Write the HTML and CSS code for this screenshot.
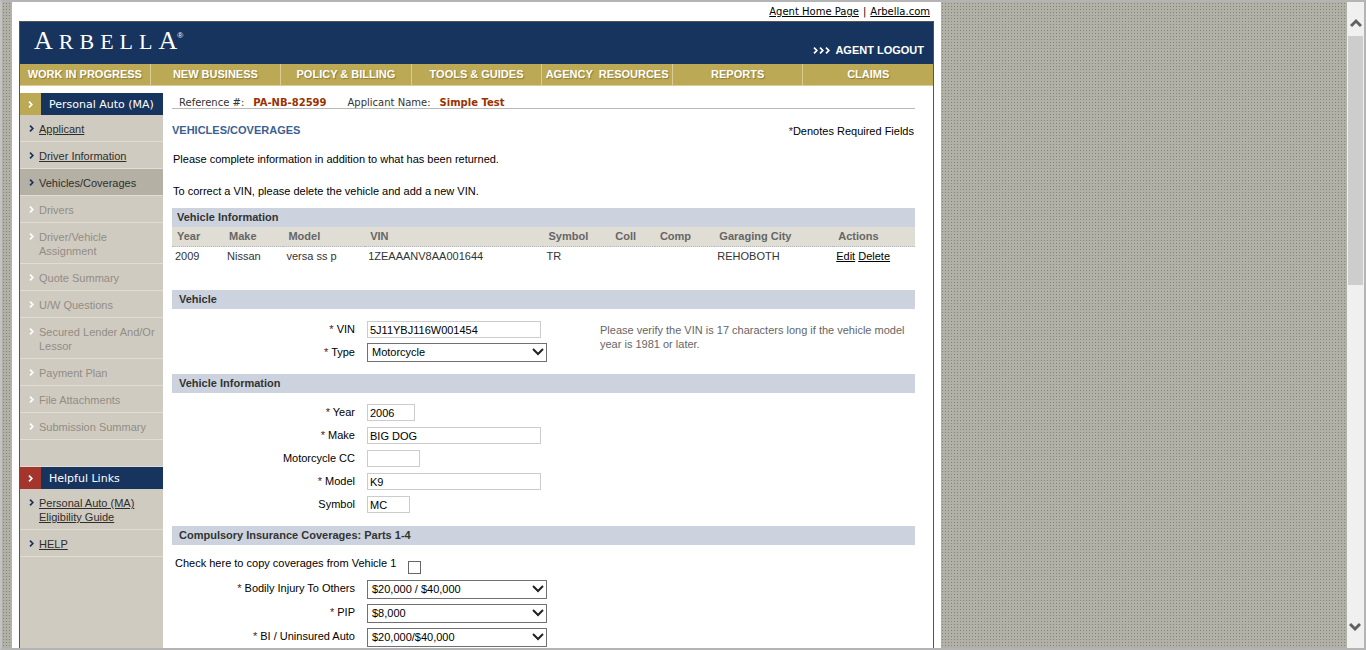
FILE: index.html
```html
<!DOCTYPE html>
<html lang="en">
<head>
<meta charset="utf-8">
<title>Arbella - Vehicles/Coverages</title>
<link rel="stylesheet" href="styles.css">
</head>
<body>
<svg class="sprite" aria-hidden="true">
  <symbol id="arrow" viewBox="0 0 5 7"><path d="M1 .7l2.8 2.8L1 6.3" fill="none" stroke="currentColor" stroke-width="1.7"/></symbol>
  <symbol id="caret" viewBox="0 0 12 8"><path d="M1 1l5 5 5-5" fill="none" stroke="currentColor" stroke-width="2"/></symbol>
  <symbol id="scroll" viewBox="0 0 12 10"><path d="M1 8l5-5 5 5" fill="none" stroke="#606060" stroke-width="3"/></symbol>
</svg>
<div class="window">
  <div class="view">
    <div class="sheet">
      <div class="toplinks"><a href="#">Agent Home Page</a><span>|</span><a href="#">Arbella.com</a></div>
      <div class="frame">
        <header class="banner">
          <div class="logo"><span class="cap">A</span>RBELL<span class="cap last">A</span><span class="reg">®</span></div>
          <a class="logout" href="#"><span class="chevrons"><svg><use href="#arrow"/></svg><svg><use href="#arrow"/></svg><svg><use href="#arrow"/></svg></span>AGENT LOGOUT</a>
        </header>
        <nav class="mainnav">
          <a href="#">WORK IN PROGRESS</a><a href="#">NEW BUSINESS</a><a href="#">POLICY &amp; BILLING</a><a href="#">TOOLS &amp; GUIDES</a><a href="#">AGENCY&nbsp; RESOURCES</a><a href="#">REPORTS</a><a href="#">CLAIMS</a>
        </nav>
        <div class="columns">
          <aside class="side">
            <h2 class="side-title"><span class="tab"><svg><use href="#arrow"/></svg></span><span class="name">Personal Auto (MA)</span></h2>
            <ul>
              <li><svg><use href="#arrow"/></svg><a href="#">Applicant</a></li>
              <li><svg><use href="#arrow"/></svg><a href="#">Driver Information</a></li>
              <li class="current"><svg><use href="#arrow"/></svg><span>Vehicles/Coverages</span></li>
              <li class="off"><svg><use href="#arrow"/></svg><span>Drivers</span></li>
              <li class="off"><svg><use href="#arrow"/></svg><span>Driver/Vehicle<br>Assignment</span></li>
              <li class="off"><svg><use href="#arrow"/></svg><span>Quote Summary</span></li>
              <li class="off"><svg><use href="#arrow"/></svg><span>U/W Questions</span></li>
              <li class="off"><svg><use href="#arrow"/></svg><span>Secured Lender And/Or Lessor</span></li>
              <li class="off"><svg><use href="#arrow"/></svg><span>Payment Plan</span></li>
              <li class="off"><svg><use href="#arrow"/></svg><span>File Attachments</span></li>
              <li class="off"><svg><use href="#arrow"/></svg><span>Submission Summary</span></li>
            </ul>
            <h2 class="side-title help"><span class="tab"><svg><use href="#arrow"/></svg></span><span class="name">Helpful Links</span></h2>
            <ul>
              <li><svg><use href="#arrow"/></svg><a href="#">Personal Auto (MA)<br>Eligibility Guide</a></li>
              <li><svg><use href="#arrow"/></svg><a href="#">HELP</a></li>
            </ul>
          </aside>
          <main class="main">
            <div class="reference"><span>Reference #:</span><b>PA-NB-82599</b><span class="second">Applicant Name:</span><b>Simple Test</b></div>
            <div class="heading"><h1>VEHICLES/COVERAGES</h1><span><i>*</i>Denotes Required Fields</span></div>
            <p>Please complete information in addition to what has been returned.</p>
            <p>To correct a VIN, please delete the vehicle and add a new VIN.</p>
            <table class="vehicles">
              <caption>Vehicle Information</caption>
              <colgroup><col class="w7"><col class="w8"><col class="w11"><col class="w24"><col class="w9"><col class="w6"><col class="w8"><col class="w16"><col class="w11"></colgroup>
              <thead><tr><th>Year</th><th>Make</th><th>Model</th><th>VIN</th><th>Symbol</th><th>Coll</th><th>Comp</th><th>Garaging City</th><th>Actions</th></tr></thead>
              <tbody><tr><td>2009</td><td>Nissan</td><td>versa ss p</td><td>1ZEAAANV8AA001644</td><td>TR</td><td></td><td></td><td>REHOBOTH</td><td><a href="#">Edit</a> <a href="#">Delete</a></td></tr></tbody>
            </table>

            <h3 class="section">Vehicle</h3>
            <div class="vin-block">
              <div class="fields">
                <label for="vin"><i>*</i> VIN</label><input class="long" id="vin" type="text" value="5J11YBJ116W001454">
                <label for="type"><i>*</i> Type</label><span class="pick"><select id="type"><option>Motorcycle</option></select><svg><use href="#caret"/></svg></span>
              </div>
              <div class="note">Please verify the VIN is 17 characters long if the vehicle model year is 1981 or later.</div>
            </div>

            <h3 class="section">Vehicle Information</h3>
            <div class="fields info">
              <label for="year"><i>*</i> Year</label><input class="tiny" id="year" type="text" value="2006">
              <label for="make"><i>*</i> Make</label><input class="long" id="make" type="text" value="BIG DOG">
              <label for="cc">Motorcycle CC</label><input class="small" id="cc" type="text">
              <label for="model"><i>*</i> Model</label><input class="long" id="model" type="text" value="K9">
              <label for="symbol">Symbol</label><input class="mini" id="symbol" type="text" value="MC">
            </div>

            <h3 class="section">Compulsory Insurance Coverages: Parts 1-4</h3>
            <div class="copy"><label for="copy">Check here to copy coverages from Vehicle 1</label><input id="copy" type="checkbox"></div>
            <div class="fields coverages">
              <label for="bi"><i>*</i> Bodily Injury To Others</label><span class="pick"><select id="bi"><option>$20,000 / $40,000</option></select><svg><use href="#caret"/></svg></span>
              <label for="pip"><i>*</i> PIP</label><span class="pick"><select id="pip"><option>$8,000</option></select><svg><use href="#caret"/></svg></span>
              <label for="ua"><i>*</i> BI / Uninsured Auto</label><span class="pick"><select id="ua"><option>$20,000/$40,000</option></select><svg><use href="#caret"/></svg></span>
            </div>
          </main>
        </div>
      </div>
    </div>
  </div>
  <div class="scrollbar">
    <button type="button" aria-label="Scroll up"><svg><use href="#scroll"/></svg></button>
    <div class="track"><div class="thumb"></div></div>
    <button class="down" type="button" aria-label="Scroll down"><svg><use href="#scroll"/></svg></button>
  </div>
</div>
</body>
</html>
```
FILE: styles.css
```css
* { box-sizing: border-box; }
body { margin: 0; font: 11px/14px "Liberation Sans", Arial, sans-serif; color: #000; }
a { color: inherit; }
i { font-style: normal; color: #4a1a10; }
h1, h2, h3, p, ul { margin: 0; padding: 0; }
ul { list-style: none; }
.sprite { display: none; }

.window { display: flex; height: 100vh; border: 2px solid #b4b4b4; border-left-color: #c2c2c2; }
.view {
  flex: 1; min-width: 0; overflow: hidden; padding-left: 10px;
  background-color: #84857a;
  background-image: linear-gradient(90deg, #b1b1a7 2px, transparent 2px), linear-gradient(#b1b1a7 2px, transparent 2px);
  background-size: 3px 3px; background-position: -1px -1px;
}
.sheet { width: 100%; max-width: 929px; min-height: 100%; padding: 0 7px; background: #fff; }
.toplinks {
  display: flex; justify-content: flex-end; gap: 4px; padding: 3px 4px 2px;
  font: 10px/14px "DejaVu Sans", Verdana, sans-serif;
}
.frame { border: 1px solid #55554b; }

.banner { display: flex; justify-content: space-between; height: 42px; background: #17345f; color: #fff; }
.logo { display: flex; align-items: baseline; padding: 5px 0 0 14px; font: 22px/28px "Liberation Serif", serif; letter-spacing: 6px; }
.logo .cap { font-size: 26px; }
.logo .last { letter-spacing: 0; }
.logo .reg { align-self: flex-start; padding-top: 1px; font: 8px/16px "Liberation Sans", sans-serif; letter-spacing: 0; }
.logout { display: flex; align-items: center; gap: 5px; align-self: flex-end; padding: 0 9px 7px 0; font-weight: bold; text-decoration: none; }
.chevrons { display: flex; gap: 1px; }
.chevrons svg { width: 5px; height: 7px; }

.mainnav { display: flex; background: #bba955; border-bottom: 1px solid #dccb93; }
.mainnav a {
  flex: 1; padding: 3px 0 4px; border-right: 1px solid #dccb93; text-align: center; white-space: nowrap;
  font-weight: bold; text-decoration: none; color: #fff; text-shadow: 1px 1px 1px #8d7c38;
}
.mainnav a:last-child { border-right: 0; }

.columns { display: flex; padding-top: 7px; }
.side { width: 143px; flex: none; min-height: 640px; background: #d0cbc0; }
.side-title { display: flex; background: #17345f; color: #fff; font: 11px/21px "DejaVu Sans", Verdana, sans-serif; }
.side-title .name { padding-top: 1px; }
.side-title .tab { display: flex; align-items: center; justify-content: center; width: 21px; margin-right: 8px; background: #bba955; }
.side-title svg { width: 5px; height: 7px; }
.help { margin-top: 26px; border-top: 1px solid #e0ddd4; }
.help .tab { background: #a3352c; }
.side li { display: flex; gap: 5px; padding: 7px 0 5px 9px; border-bottom: 1px solid #e0ddd4; color: #2e2e2e; }
.side li svg { flex: none; width: 5px; height: 7px; margin: 3px 0 0; color: #17345f; }
.side .current { background: #b5b0a4; }
.side .off { color: #918d87; }
.side .off svg { color: #fff; }

.main { flex: 1; min-width: 0; padding: 2px 18px 0 9px; }
.reference { display: flex; gap: 9px; padding: 2px 0 0 7px; border-bottom: 1px solid #b8b8b8; font: 10px/11px "DejaVu Sans", Verdana, sans-serif; color: #333; }
.reference b { color: #993300; }
.reference .second { margin-left: 12px; }
.heading { display: flex; justify-content: space-between; padding: 15px 1px 0 0; }
.heading h1 { font-size: 11px; line-height: 12px; color: #3c5f92; }
.main p { padding: 14px 0 4px 1px; }

.vehicles { width: 100%; margin-top: 6px; table-layout: fixed; border-collapse: collapse; text-align: left; }
.vehicles caption { padding: 2px 5px 3px; background: #ccd3de; color: #333; font-weight: bold; text-align: left; }
.vehicles th { padding: 2px 0 3px 5px; border-bottom: 1px dotted #b8b8b8; background: #e0ddd4; color: #666; }
.vehicles td { padding: 2px 0 3px 3px; color: #333; white-space: nowrap; }
.vehicles a { color: #000; }
.w6 { width: 6%; } .w7 { width: 7%; } .w8 { width: 8%; } .w9 { width: 9%; }
.w11 { width: 11%; } .w16 { width: 16%; } .w24 { width: 24%; }

.section { padding: 2px 7px 3px; background: #ccd3de; color: #333; font-size: 11px; line-height: 14px; }
.vehicles + .section { margin-top: 24px; }
.fields { display: grid; grid-template-columns: 183px auto; column-gap: 12px; justify-content: start; align-items: center; grid-auto-rows: 23px; }
.fields label { text-align: right; padding-bottom: 2px; }
.vin-block { display: flex; gap: 53px; padding: 9px 0 10px; }
.vin-block .fields { flex: none; }
.note { padding-top: 5px; color: #666; }
.info { padding: 8px 0 10px; }
input[type="text"] { height: 17px; padding: 1px 2px 0; border: 1px solid #ccc; background: #fff; font: inherit; color: #000; }
.long { width: 174px; }
.tiny { width: 48px; }
.small { width: 53px; }
.mini { width: 43px; }
.pick { position: relative; width: 180px; height: 19px; }
.pick select { display: block; width: 100%; height: 100%; padding: 0 4px 1px; border: 1px solid #707070; border-radius: 0; background: #fff; appearance: none; font: inherit; color: #000; }
.pick svg { position: absolute; top: 5px; right: 3px; width: 12px; height: 8px; pointer-events: none; color: #222; }
.copy { display: flex; gap: 12px; padding: 11px 0 3px 3px; }
.copy input { appearance: none; width: 13px; height: 13px; margin: 5px 0 0; border: 1px solid #666; background: #fff; }
.coverages { grid-auto-rows: 24px; }

.scrollbar { display: flex; flex-direction: column; width: 17px; background: #f0f0f0; }
.scrollbar button { display: flex; justify-content: center; align-items: center; height: 34px; padding: 8px 0 0; border: 0; background: none; }
.scrollbar svg { width: 12px; height: 10px; }
.scrollbar .down { transform: rotate(180deg); }
.track { flex: 1; padding: 0 1px; }
.thumb { height: 43%; background: #cdcdcd; }
```
